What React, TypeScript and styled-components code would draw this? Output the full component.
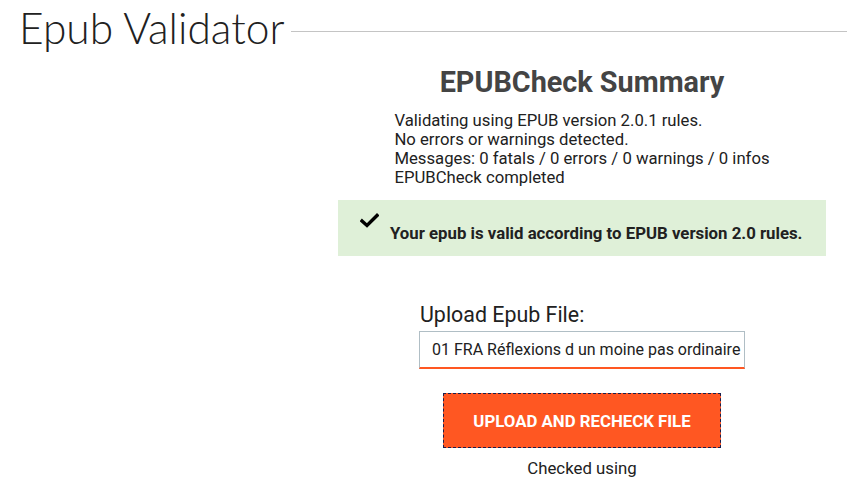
import React from "react";
import styled, { createGlobalStyle } from "styled-components";

const Global = createGlobalStyle`
  html, body { margin: 0; padding: 0; background: #fff; }
  body { font-family: Roboto, "Liberation Sans", sans-serif; color: #212121; }
  * { box-sizing: border-box; }
`;

const Header = styled.header`
  display: flex;
  align-items: flex-start;
  padding-left: 19px;
  height: 58px;
`;

const PageTitle = styled.h1`
  margin: 6px 0 0 0;
  font-family: Lato, "Open Sans", sans-serif;
  font-weight: 300;
  font-size: 42.5px;
  line-height: 44px;
  color: #212121;
  white-space: nowrap;
`;

const Rule = styled.div`
  flex: 1;
  height: 1px;
  background: #c4c4c4;
  margin: 31px 0 0 7px;
`;

const Main = styled.main`
  display: grid;
  grid-template-columns: 317px 530px;
`;

const Column = styled.section`
  display: flex;
  flex-direction: column;
  align-items: center;
`;

const SummaryTitle = styled.h2`
  margin: 7px 0 0 0;
  font-size: 28.8px;
  line-height: 34px;
  font-weight: 700;
  color: #444;
`;

const Summary = styled.div`
  margin-top: 12px;
  font-size: 16.7px;
  line-height: 19px;
  color: #212121;
`;

const SuccessBox = styled.div`
  margin-top: 13px;
  width: 488px;
  height: 56px;
  background: #dff0d8;
  display: flex;
  align-items: flex-start;
  padding: 13px 0 0 22px;
`;

const CheckIcon = styled.svg`
  width: 19px;
  height: 15px;
  flex: none;
`;

const SuccessText = styled.strong`
  margin: 10px 0 0 11px;
  font-size: 16.8px;
  line-height: 20px;
  font-weight: 700;
  color: #212121;
  white-space: nowrap;
`;

const UploadBlock = styled.div`
  margin-top: 46px;
  width: 326px;
  display: flex;
  flex-direction: column;
`;

const Label = styled.label`
  font-size: 21.4px;
  line-height: 25px;
  color: #212121;
  padding-left: 1px;
`;

const FileField = styled.div`
  margin-top: 4px;
  height: 38px;
  border: 1px solid #b0bec5;
  border-bottom: 2px solid #ff5722;
  padding: 0 0 0 12px;
  font-size: 16px;
  line-height: 35px;
  color: #212121;
  white-space: nowrap;
  overflow: hidden;
`;

const Button = styled.button`
  margin-top: 24px;
  width: 278px;
  height: 55px;
  background: #ff5722;
  border: 1px dashed #1a1f4e;
  color: #fff;
  font-family: Roboto, "Liberation Sans", sans-serif;
  font-size: 16.8px;
  font-weight: 700;
  text-transform: uppercase;
  cursor: pointer;
  padding: 0;
`;

const Note = styled.p`
  margin: 10px 0 0 0;
  font-size: 16.8px;
  line-height: 20px;
  color: #212121;
`;

export default function App() {
  return (
    <>
      <Global />
      <Header>
        <PageTitle>Epub Validator</PageTitle>
        <Rule />
      </Header>
      <Main>
        <div />
        <Column>
          <SummaryTitle>EPUBCheck Summary</SummaryTitle>
          <Summary>
            Validating using EPUB version 2.0.1 rules.
            <br />
            No errors or warnings detected.
            <br />
            Messages: 0 fatals / 0 errors / 0 warnings / 0 infos
            <br />
            EPUBCheck completed
          </Summary>
          <SuccessBox>
            <CheckIcon viewBox="0 0 19 15">
              <polyline
                points="2,8 7,12.5 17,2.5"
                fill="none"
                stroke="#000"
                strokeWidth="3.4"
                strokeLinecap="square"
              />
            </CheckIcon>
            <SuccessText>
              Your epub is valid according to EPUB version 2.0 rules.
            </SuccessText>
          </SuccessBox>
          <UploadBlock>
            <Label>Upload Epub File:</Label>
            <FileField>
              01 FRA Réflexions d un moine pas ordinaire - Copie.epub
            </FileField>
          </UploadBlock>
          <Button>Upload and recheck file</Button>
          <Note>Checked using</Note>
        </Column>
      </Main>
    </>
  );
}
